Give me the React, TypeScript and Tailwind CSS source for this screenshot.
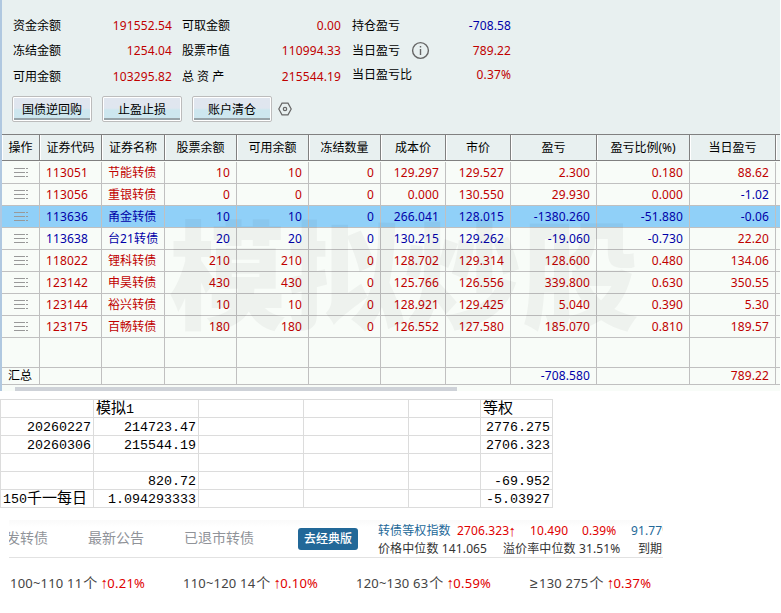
import React from 'react';

const RED = 'text-[#c00000]';
const BLUE = 'text-[#0000a8]';

const COLS =
  'grid grid-cols-[38px_62px_63px_72px_72px_72px_65px_65px_86px_93px_86px_4px]';

const headers = [
  '操作', '证券代码', '证券名称', '股票余额', '可用余额', '冻结数量',
  '成本价', '市价', '盈亏', '盈亏比例(%)', '当日盈亏', '',
];

type Row = { cells: string[]; blue?: boolean; selected?: boolean };

const rows: Row[] = [
  { cells: ['113051', '节能转债', '10', '10', '0', '129.297', '129.527', '2.300', '0.180', '88.62'] },
  { cells: ['113056', '重银转债', '0', '0', '0', '0.000', '130.550', '29.930', '0.000', '-1.02'] },
  { cells: ['113636', '甬金转债', '10', '10', '0', '266.041', '128.015', '-1380.260', '-51.880', '-0.06'], blue: true, selected: true },
  { cells: ['113638', '台21转债', '20', '20', '0', '130.215', '129.262', '-19.060', '-0.730', '22.20'], blue: true },
  { cells: ['118022', '锂科转债', '210', '210', '0', '128.702', '129.314', '128.600', '0.480', '134.06'] },
  { cells: ['123142', '申昊转债', '430', '430', '0', '125.766', '126.556', '339.800', '0.630', '350.55'] },
  { cells: ['123144', '裕兴转债', '10', '10', '0', '128.921', '129.425', '5.040', '0.390', '5.30'] },
  { cells: ['123175', '百畅转债', '180', '180', '0', '126.552', '127.580', '185.070', '0.810', '189.57'] },
];

const sheet = [
  ['', '模拟1', '', '', '', '等权'],
  ['20260227', '214723.47', '', '', '', '2776.275'],
  ['20260306', '215544.19', '', '', '', '2706.323'],
  ['', '', '', '', '', ''],
  ['', '820.72', '', '', '', '-69.952'],
  ['150千一每日', '1.094293333', '', '', '', '-5.03927'],
];

function Stat({ label, value, blue, info }: { label: string; value: string; blue?: boolean; info?: boolean }) {
  return (
    <div className="flex h-[25px] w-[159px] items-center justify-between">
      <div className="flex items-center">
        <span className="tracking-normal">{label}</span>
        {info && (
          <svg className="ml-[11px]" width="19" height="19" viewBox="0 0 19 19" fill="none" stroke="#666" strokeWidth="1.4">
            <circle cx="9.5" cy="9.5" r="7.9" />
            <path d="M9.5 8v6M9.5 5v1.5" />
          </svg>
        )}
      </div>
      <span className={blue ? BLUE : RED}>{value}</span>
    </div>
  );
}

function PushButton({ children }: { children: React.ReactNode }) {
  return (
    <button className="h-[26px] w-20 rounded-[2px] border border-[#bcbcbc] bg-white p-px">
      <span className="flex h-full items-center justify-center border-b-2 border-[#98a4a9] bg-linear-to-b from-[#e0e6ef] from-50% to-[#cde7ef] to-60% pt-[3px] tracking-normal">
        {children}
      </span>
    </button>
  );
}

function RowMenuIcon() {
  return (
    <svg width="14" height="9" viewBox="0 0 14 9" stroke="#999" strokeWidth="1" shapeRendering="crispEdges">
      <path d="M0 .5h11M12 .5h2M0 4.5h11M12 4.5h2M0 8.5h11M12 8.5h2" />
    </svg>
  );
}

function Up() {
  return (
    <span className="inline-flex h-[11px] w-[6px] justify-center font-['Liberation_Sans',sans-serif] text-[15px] leading-[11px] tracking-normal">
      ↑
    </span>
  );
}

function Bucket({ range, count, pct }: { range: string; count: string; pct: string }) {
  const atLeast = range.startsWith('≥');
  return (
    <div className="flex items-baseline whitespace-pre">
      {atLeast && <span className="w-[9px] font-['Liberation_Sans',sans-serif] text-[14px]">≥</span>}
      <span>{atLeast ? range.slice(1) : range} {count}</span>
      <span className="mr-1 ml-px text-[14px] tracking-normal">个</span>
      <span className="tracking-[0.25px] text-[#e00000]"><Up />{pct}</span>
    </div>
  );
}

export default function App() {
  return (
    <div className="h-[613px] w-[781px] overflow-hidden bg-white font-['Noto_Sans','Noto_Sans_CJK_SC',sans-serif] text-[12px] leading-none tracking-[0.12px] text-black">
      <div className="h-[391px] w-[780px] overflow-hidden border-l-2 border-[#b0c8e0] bg-[#f8fcf8]">
        <div className="h-[134px] bg-[#e8f0f0]">
          <div className="flex gap-[11px] pt-[13px] pl-[11px]">
            <div>
              <Stat label="资金余额" value="191552.54" />
              <Stat label="冻结金额" value="1254.04" />
              <div className="-mb-px pt-px"><Stat label="可用金额" value="103295.82" /></div>
            </div>
            <div className="-ml-px">
              <Stat label="可取金额" value="0.00" />
              <Stat label="股票市值" value="110994.33" />
              <div className="-mb-px pt-px"><Stat label="总 资 产" value="215544.19" /></div>
            </div>
            <div>
              <Stat label="持仓盈亏" value="-708.58" blue />
              <Stat label="当日盈亏" value="789.22" info />
              <div className="-mt-px"><Stat label="当日盈亏比" value="0.37%" /></div>
            </div>
          </div>
          <div className="flex items-center gap-[10px] pt-2 pl-[10px]">
            <PushButton>国债逆回购</PushButton>
            <PushButton>止盈止损</PushButton>
            <PushButton>账户清仓</PushButton>
            <svg className="-ml-1" width="14" height="14" viewBox="0 0 14 14" fill="none" stroke="#666" strokeWidth="1.2">
              <path d="M4 1.2h6L13.2 7 10 12.8H4L.8 7Z" />
              <circle cx="7" cy="7" r="1.7" />
            </svg>
          </div>
        </div>

        <div className="relative">
          <div className={`${COLS} h-[27px] border-y border-[#808080] bg-[#e8f0f0]`}>
            {headers.map((h, i) => (
              <div key={i} className="flex items-center justify-center border-r border-l border-r-[#808080] border-l-white pr-px whitespace-nowrap tracking-normal last:border-r-0">
                {h}
              </div>
            ))}
          </div>
          {rows.map((r, ri) => (
            <div
              key={r.cells[0]}
              className={`${COLS} ${ri === 0 ? 'h-[23px] pt-px' : 'h-[22px]'} border-b border-[#c0c0c0] ${r.selected ? 'bg-[#90d0f8]' : ''} ${r.blue ? BLUE : RED}`}
            >
              <div className="flex items-center border-r border-[#c0c0c0] pl-3">
                <RowMenuIcon />
              </div>
              {r.cells.map((c, i) => {
                const tone = i === 9 ? (c.startsWith('-') ? BLUE : RED) : '';
                return (
                  <div
                    key={i}
                    className={`flex items-center border-r border-[#c0c0c0] whitespace-nowrap ${i < 2 ? 'pl-[6px]' : 'justify-end pr-[6px]'} ${tone}`}
                  >
                    {c}
                  </div>
                );
              })}
            </div>
          ))}
          <div className={`${COLS} h-[30px] border-b border-[#c0c0c0]`}>
            {headers.slice(0, 11).map((_, i) => (
              <div key={i} className="border-r border-[#c0c0c0]" />
            ))}
          </div>
          <div className={`${COLS} h-[17px] border-b border-[#c0c0c0]`}>
            {['汇总', '', '', '', '', '', '', '', '-708.580', '', '789.22'].map((c, i) => (
              <div
                key={i}
                className={`flex items-center border-r border-[#c0c0c0] ${i === 0 ? 'pl-[6px]' : 'justify-end pr-[6px]'} ${i === 8 ? BLUE : i === 10 ? RED : ''}`}
              >
                {c}
              </div>
            ))}
          </div>
          <div className="pointer-events-none absolute top-[67px] left-[167px] font-['Noto_Sans_CJK_SC'] text-[117.5px] leading-[136px] font-black tracking-normal whitespace-nowrap text-black/4">
            模拟炒股
          </div>
        </div>
        <div className="mt-[2px] ml-[13px] h-1 w-[442px] bg-[#ced2d8]" />
      </div>

      <div className="mt-2 w-[553px] border-t border-l border-[#dcdcdc] font-['Liberation_Mono','Noto_Sans_CJK_SC',monospace] text-[13.34px] tracking-normal">
        {sheet.map((line, li) => (
          <div key={li} className="grid h-[18px] grid-cols-[93px_105px_105px_105px_72px_72px] grid-rows-[17px] border-b border-[#dcdcdc]">
            {line.map((c, ci) => {
              const hasText = /[^\d.-]/.test(c);
              return (
                <div
                  key={ci}
                  className={`flex items-center border-r border-[#dcdcdc] pt-[3px] whitespace-nowrap ${hasText ? 'justify-start pl-[2px]' : 'justify-end pr-[2px]'}`}
                >
                  {c.split(/([^\d.-]+)/).map((p, i) => (
                    <span key={i} className={i % 2 ? 'text-[15px] leading-[14px]' : ''}>{p}</span>
                  ))}
                </div>
              );
            })}
          </div>
        ))}
      </div>

      <div className="mt-3 ml-[9px] w-[654px] overflow-hidden">
        <div className="flex h-[38px] border-b border-[#e2e2e2] bg-linear-to-b from-[#fafafa] to-white to-20% whitespace-nowrap">
          <div className="-ml-[3px] flex h-[35px] items-center text-[14px] tracking-normal text-[#909399]">
            <span className="w-[82px]">发转债</span>
            <span className="w-24">最新公告</span>
            <span className="w-[114px]">已退市转债</span>
          </div>
          <div className="mt-2 flex h-[22px] w-[60px] shrink-0 items-center justify-center rounded-[3px] bg-[#226898] font-medium tracking-normal text-white">
            去经典版
          </div>
          <div className="ml-5 shrink-0 pt-[2px] text-[#333]">
            <div className="flex h-[18px] items-center text-[#e00000]">
              <span className="w-[79px] text-[#226898]">转债等权指数</span>
              <span className="flex h-3 w-[73px]"><span>2706.323</span><Up /></span>
              <span className="w-[52px]">10.490</span>
              <span className="w-[49px]">0.39%</span>
              <span className="text-[#226898]">91.77%</span>
            </div>
            <div className="flex h-[18px] items-center">
              <span className="w-[125px]">价格中位数 141.065</span>
              <span className="w-[135px]">溢价率中位数 31.51%</span>
              <span>到期收益率</span>
            </div>
          </div>
        </div>
        <div className="grid h-[49px] grid-cols-[173px_173px_174px_130px] items-center pl-px text-[13px] tracking-[0.2px] text-[#444]">
          <Bucket range="100~110" count="11" pct="0.21%" />
          <Bucket range="110~120" count="14" pct="0.10%" />
          <Bucket range="120~130" count="63" pct="0.59%" />
          <Bucket range="≥130" count="275" pct="0.37%" />
        </div>
      </div>
    </div>
  );
}
